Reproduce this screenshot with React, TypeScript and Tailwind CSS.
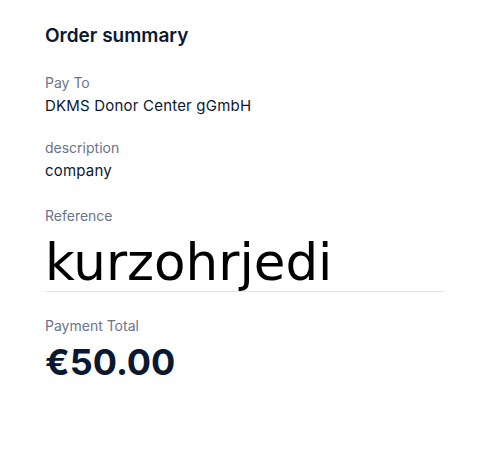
export default function App() {
  return (
    <div className="min-h-screen bg-white font-['Inter',sans-serif] text-[#0a1930]">
      <div className="w-[400px] ml-[45px] pt-[24px]">
        <h2 className="text-[19px] font-semibold leading-[24px]">Order summary</h2>

        <div className="mt-[25px]">
          <div className="text-[14px] leading-[20px] text-[#6b7489]">Pay To</div>
          <div className="mt-[3px] text-[15px] leading-[20px] tracking-[0.2px]">DKMS Donor Center gGmbH</div>
        </div>

        <div className="mt-[22px]">
          <div className="text-[14px] leading-[20px] text-[#6b7489]">description</div>
          <div className="mt-[3px] text-[15px] leading-[20px] tracking-[0.2px]">company</div>
        </div>

        <div className="mt-[25px]">
          <div className="text-[14px] leading-[20px] text-[#6b7489]">Reference</div>
          <input
            readOnly
            value="kurzohrjedi"
            className="mt-[8px] block w-full border-b border-[#e4e6ea] bg-transparent font-['DejaVu_Sans',sans-serif] text-[51.5px] leading-[57px] text-black outline-none"
          />
        </div>

        <div className="mt-[24px]">
          <div className="text-[14px] leading-[20px] text-[#6b7489]">Payment Total</div>
          <div className="mt-[5px] text-[36px] font-bold leading-[42px]">€50.00</div>
        </div>
      </div>
    </div>
  );
}
